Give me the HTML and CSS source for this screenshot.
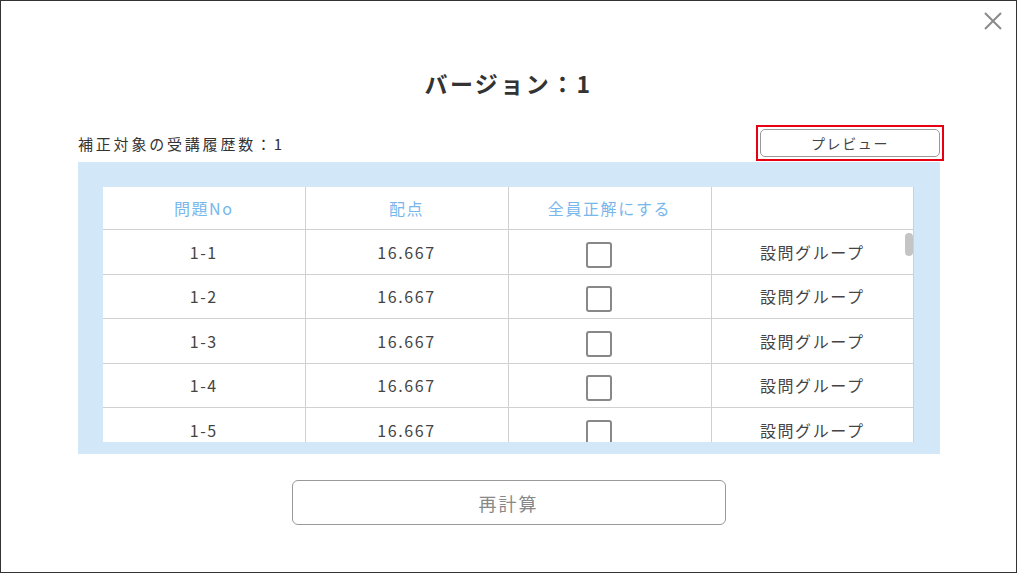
FILE: index.html
```html
<!DOCTYPE html>
<html lang="ja">
<head>
    <meta charset="UTF-8">
    <meta name="viewport" content="width=device-width, initial-scale=1.0">
    <title>バージョン：1</title>
    <link rel="stylesheet" href="styles.css">
</head>
<body>
    <div class="dialog">
        <button class="close-btn" aria-label="閉じる">
            <svg width="20" height="20" viewBox="0 0 20 20">
                <path d="M2 2 L18 18 M18 2 L2 18" stroke="#8a8a8a" stroke-width="2" fill="none"/>
            </svg>
        </button>

        <h1 class="title">バージョン：1</h1>

        <div class="content">
            <div class="toolbar">
                <span class="count">補正対象の受講履歴数：1</span>
                <span class="highlight">
                    <button class="preview-btn">プレビュー</button>
                </span>
            </div>

            <div class="panel">
                <div class="grid">
                    <table class="grid-head">
                        <colgroup>
                            <col class="c1"><col class="c2"><col class="c3"><col>
                        </colgroup>
                        <tr>
                            <th>問題No</th>
                            <th>配点</th>
                            <th>全員正解にする</th>
                            <th></th>
                        </tr>
                    </table>
                    <div class="grid-body">
                        <table>
                            <colgroup>
                                <col class="c1"><col class="c2"><col class="c3"><col>
                            </colgroup>
                            <tbody id="rows">
                                <!-- rows are rendered below -->
                            </tbody>
                        </table>
                        <div class="scroll-thumb"></div>
                    </div>
                </div>
            </div>

            <div class="actions">
                <button class="recalc-btn">再計算</button>
            </div>
        </div>
    </div>

    <script>
        const rows = document.getElementById('rows');
        for (let i = 1; i <= 5; i++) {
            const tr = document.createElement('tr');
            tr.innerHTML = `
                <td>1-${i}</td>
                <td>16.667</td>
                <td><span class="check"></span></td>
                <td>設問グループ</td>
            `;
            rows.appendChild(tr);
        }
    </script>
</body>
</html>
```

FILE: styles.css
```css
body {
    margin: 0;
    padding: 0;
    background-color: #fff;
    font-family: "Noto Sans CJK JP", "Noto Sans", sans-serif;
    color: #333;
}

.dialog {
    position: relative;
    box-sizing: border-box;
    width: 1017px;
    height: 573px;
    border: 1px solid #333;
    background-color: #fff;
    padding-top: 65px;
}

.close-btn {
    position: absolute;
    top: 9px;
    right: 12px;
    width: 22px;
    height: 22px;
    padding: 1px;
    border: none;
    background: none;
    cursor: pointer;
}

.title {
    margin: 0;
    text-align: center;
    font-size: 23px;
    line-height: 34px;
    font-weight: bold;
    letter-spacing: 2.4px;
    color: #333;
}

.content {
    width: 862px;
    margin-left: 77px;
}

.toolbar {
    display: flex;
    justify-content: space-between;
    align-items: center;
    margin-top: 25px;
    margin-bottom: 1px;
}

.count {
    font-size: 15px;
    letter-spacing: 2.8px;
    color: #333;
}

.highlight {
    display: flex;
    margin-right: -4px;
    padding: 2px;
    border: 2px solid #e60012;
}

.preview-btn {
    width: 180px;
    height: 28px;
    background-color: #fff;
    border: 1px solid #999;
    border-radius: 5px;
    font-family: inherit;
    font-size: 14px;
    letter-spacing: 1.6px;
    color: #444;
    cursor: pointer;
}

.panel {
    background-color: #d2e8f8;
    padding: 25px 26px 12px 25px;
}

.grid {
    background-color: #fff;
    border-right: 1px solid #d0d0d0;
}

.grid table {
    width: 100%;
    border-collapse: collapse;
    table-layout: fixed;
}

.grid col.c1 { width: 202px; }
.grid col.c2 { width: 203px; }
.grid col.c3 { width: 203px; }

.grid th,
.grid td {
    padding: 0;
    text-align: center;
    border-left: 1px solid #d0d0d0;
    border-bottom: 1px solid #d0d0d0;
    font-size: 16px;
    letter-spacing: 1.6px;
}

.grid th:first-child,
.grid td:first-child {
    border-left: none;
}

.grid th {
    height: 42px;
    font-weight: normal;
    color: #77b7ec;
}

.grid td {
    height: 43.5px;
    color: #444;
}

.grid-body {
    position: relative;
    height: 212px;
    overflow: hidden;
}

.scroll-thumb {
    position: absolute;
    top: 3px;
    right: 0;
    width: 8px;
    height: 23px;
    border-radius: 4px;
    background-color: #c4c4c4;
}

.check {
    display: inline-block;
    box-sizing: border-box;
    width: 26px;
    height: 26px;
    margin-top: 6px;
    margin-right: 22px;
    border: 2px solid #888;
    border-radius: 3px;
    vertical-align: middle;
}

.actions {
    display: flex;
    justify-content: center;
    margin-top: 26px;
}

.recalc-btn {
    width: 434px;
    height: 45px;
    margin-right: 1px;
    background-color: #fff;
    border: 1px solid #999;
    border-radius: 6px;
    font-family: inherit;
    font-size: 18px;
    letter-spacing: 2px;
    color: #888;
    cursor: pointer;
}
```
